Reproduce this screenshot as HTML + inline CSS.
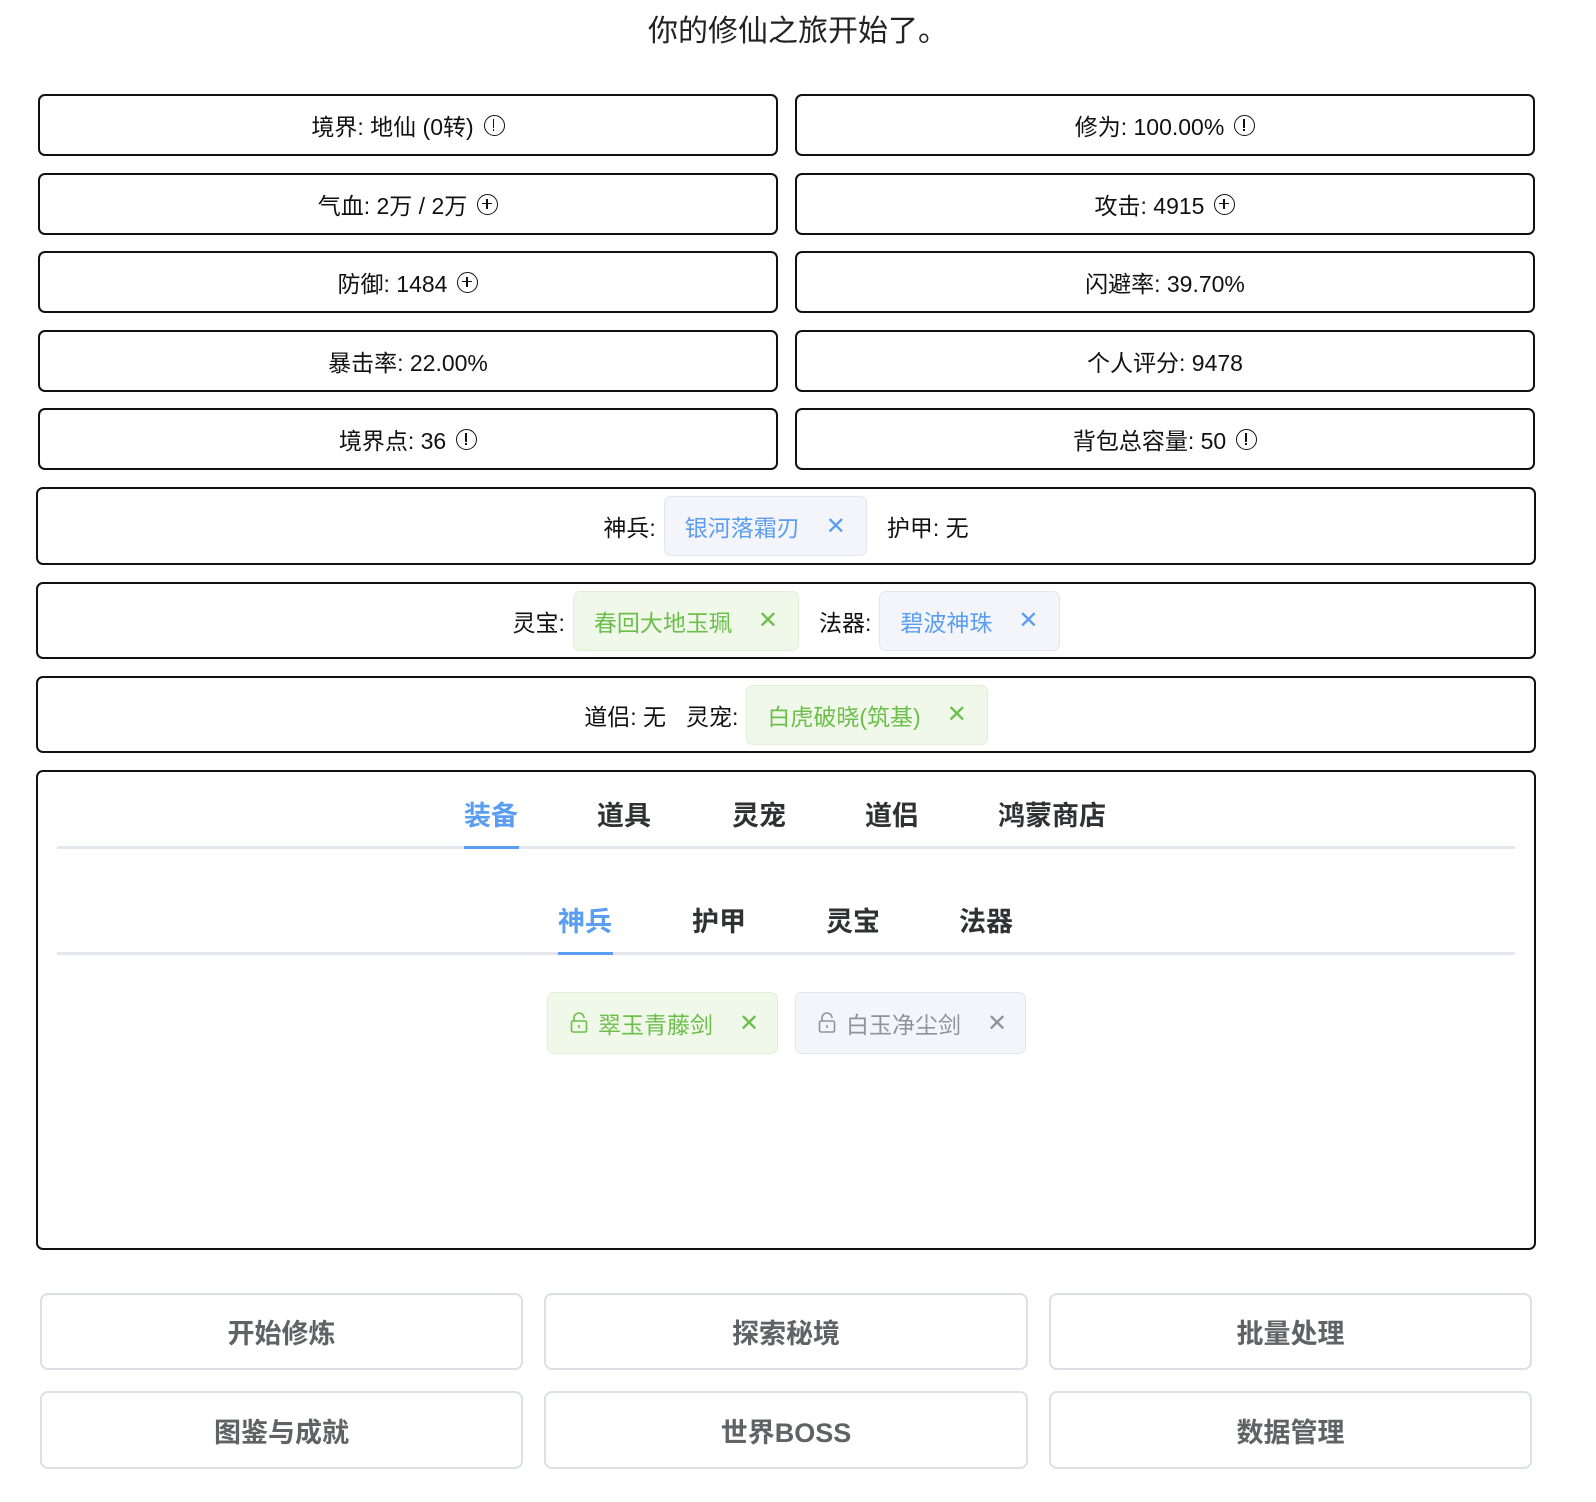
<!DOCTYPE html>
<html><head><meta charset="utf-8"><style>
*{box-sizing:border-box;margin:0;padding:0}
body{width:1596px;height:1502px;background:#fff;position:relative;overflow:hidden;font-family:"Liberation Sans","Noto Sans CJK SC",sans-serif;color:#111}
.a{position:absolute}
.t{left:0;width:1596px;top:12px;text-align:center;font-size:30px;line-height:40px;color:#222}
.s{border:2px solid #111;border-radius:7px;display:flex;align-items:center;justify-content:center;font-size:23px;gap:8px}
.ic{display:inline-block;width:21px;height:21px;border:1.6px solid #111;border-radius:50%;position:relative;margin-left:2px}
.ex::before{content:"";position:absolute;left:8px;top:3px;width:1.6px;height:9px;background:#111}
.ex::after{content:"";position:absolute;left:8px;top:13.5px;width:1.6px;height:1.8px;background:#111}
.pl::before{content:"";position:absolute;left:4px;top:8px;width:10px;height:1.6px;background:#111}
.pl::after{content:"";position:absolute;left:8px;top:4px;width:1.6px;height:10px;background:#111}
.e{border:2px solid #111;border-radius:7px;display:flex;align-items:center;justify-content:center;font-size:23px}
.tag{display:inline-flex;align-items:center;height:60px;border-radius:7px;font-size:23px;padding:0 20px}
.tb{background:#f4f5fa;border:1px solid #e2e5ee;color:#5b9df0}
.tg{background:#f0f8ea;border:1px solid #e1efd6;color:#6bbf4a}
.tx{font-size:24px;margin-left:26px;font-weight:100;transform:scaleY(1)}
.tabs{font-size:27px;font-weight:bold;color:#303133}
.btn{border:2px solid #dcdfe6;border-radius:8px;display:flex;align-items:center;justify-content:center;font-size:27px;font-weight:bold;color:#606266}
</style></head><body>
<div class="a t">你的修仙之旅开始了。</div>

<div class="a s" style="left:38px;top:94px;width:740px;height:62px">境界: 地仙 (0转)<span class="ic ex"></span></div>
<div class="a s" style="left:795px;top:94px;width:740px;height:62px">修为: 100.00%<span class="ic ex"></span></div>
<div class="a s" style="left:38px;top:173px;width:740px;height:62px">气血: 2万 / 2万<span class="ic pl"></span></div>
<div class="a s" style="left:795px;top:173px;width:740px;height:62px">攻击: 4915<span class="ic pl"></span></div>
<div class="a s" style="left:38px;top:251px;width:740px;height:62px">防御: 1484<span class="ic pl"></span></div>
<div class="a s" style="left:795px;top:251px;width:740px;height:62px">闪避率: 39.70%</div>
<div class="a s" style="left:38px;top:330px;width:740px;height:62px">暴击率: 22.00%</div>
<div class="a s" style="left:795px;top:330px;width:740px;height:62px">个人评分: 9478</div>
<div class="a s" style="left:38px;top:408px;width:740px;height:62px">境界点: 36<span class="ic ex"></span></div>
<div class="a s" style="left:795px;top:408px;width:740px;height:62px">背包总容量: 50<span class="ic ex"></span></div>

<div class="a e" style="left:36px;top:487px;width:1500px;height:78px">
 <span style="margin-right:8px">神兵:</span><span class="tag tb">银河落霜刃<span class="tx">✕</span></span><span style="margin-left:20px">护甲: 无</span>
</div>
<div class="a e" style="left:36px;top:582px;width:1500px;height:77px">
 <span style="margin-right:8px">灵宝:</span><span class="tag tg">春回大地玉珮<span class="tx">✕</span></span><span style="margin:0 8px 0 20px">法器:</span><span class="tag tb">碧波神珠<span class="tx">✕</span></span>
</div>
<div class="a e" style="left:36px;top:676px;width:1500px;height:77px">
 <span>道侣: 无</span><span style="margin:0 8px 0 20px">灵宠:</span><span class="tag tg">白虎破晓(筑基)<span class="tx">✕</span></span>
</div>

<div class="a" style="left:36px;top:770px;width:1500px;height:480px;border:2px solid #111;border-radius:7px"></div>
<div class="a" style="left:57px;top:846px;width:1458px;height:3px;background:#e4e7ed"></div>
<div class="a" style="left:464px;top:846px;width:55px;height:3px;background:#5b9df0"></div>
<div class="a tabs" style="left:464px;top:794px;color:#5b9df0">装备</div>
<div class="a tabs" style="left:597px;top:794px">道具</div>
<div class="a tabs" style="left:732px;top:794px">灵宠</div>
<div class="a tabs" style="left:865px;top:794px">道侣</div>
<div class="a tabs" style="left:998px;top:794px">鸿蒙商店</div>

<div class="a" style="left:57px;top:952px;width:1458px;height:3px;background:#e4e7ed"></div>
<div class="a" style="left:558px;top:952px;width:55px;height:3px;background:#5b9df0"></div>
<div class="a tabs" style="left:558px;top:900px;color:#5b9df0">神兵</div>
<div class="a tabs" style="left:692px;top:900px">护甲</div>
<div class="a tabs" style="left:826px;top:900px">灵宝</div>
<div class="a tabs" style="left:959px;top:900px">法器</div>

<div class="a tag tg" style="left:547px;top:992px;width:231px;height:62px;padding:0 0 0 22px">
 <svg width="18" height="22" viewBox="0 0 18 22" fill="none" stroke="#6bbf4a" stroke-width="1.6"><path d="M4 9V6a5 5 0 0 1 10 0"/><rect x="1.5" y="9" width="15" height="11" rx="1.5"/><path d="M9 13v3"/></svg>
 <span style="margin-left:10px">翠玉青藤剑</span><span class="tx">✕</span></div>
<div class="a tag tb" style="left:795px;top:992px;width:231px;height:62px;padding:0 0 0 22px;color:#909399">
 <svg width="18" height="22" viewBox="0 0 18 22" fill="none" stroke="#909399" stroke-width="1.6"><path d="M4 9V6a5 5 0 0 1 10 0"/><rect x="1.5" y="9" width="15" height="11" rx="1.5"/><path d="M9 13v3"/></svg>
 <span style="margin-left:10px">白玉净尘剑</span><span class="tx">✕</span></div>

<div class="a btn" style="left:40px;top:1293px;width:483px;height:77px">开始修炼</div>
<div class="a btn" style="left:544px;top:1293px;width:484px;height:77px">探索秘境</div>
<div class="a btn" style="left:1049px;top:1293px;width:483px;height:77px">批量处理</div>
<div class="a btn" style="left:40px;top:1391px;width:483px;height:78px">图鉴与成就</div>
<div class="a btn" style="left:544px;top:1391px;width:484px;height:78px">世界BOSS</div>
<div class="a btn" style="left:1049px;top:1391px;width:483px;height:78px">数据管理</div>
</body></html>
